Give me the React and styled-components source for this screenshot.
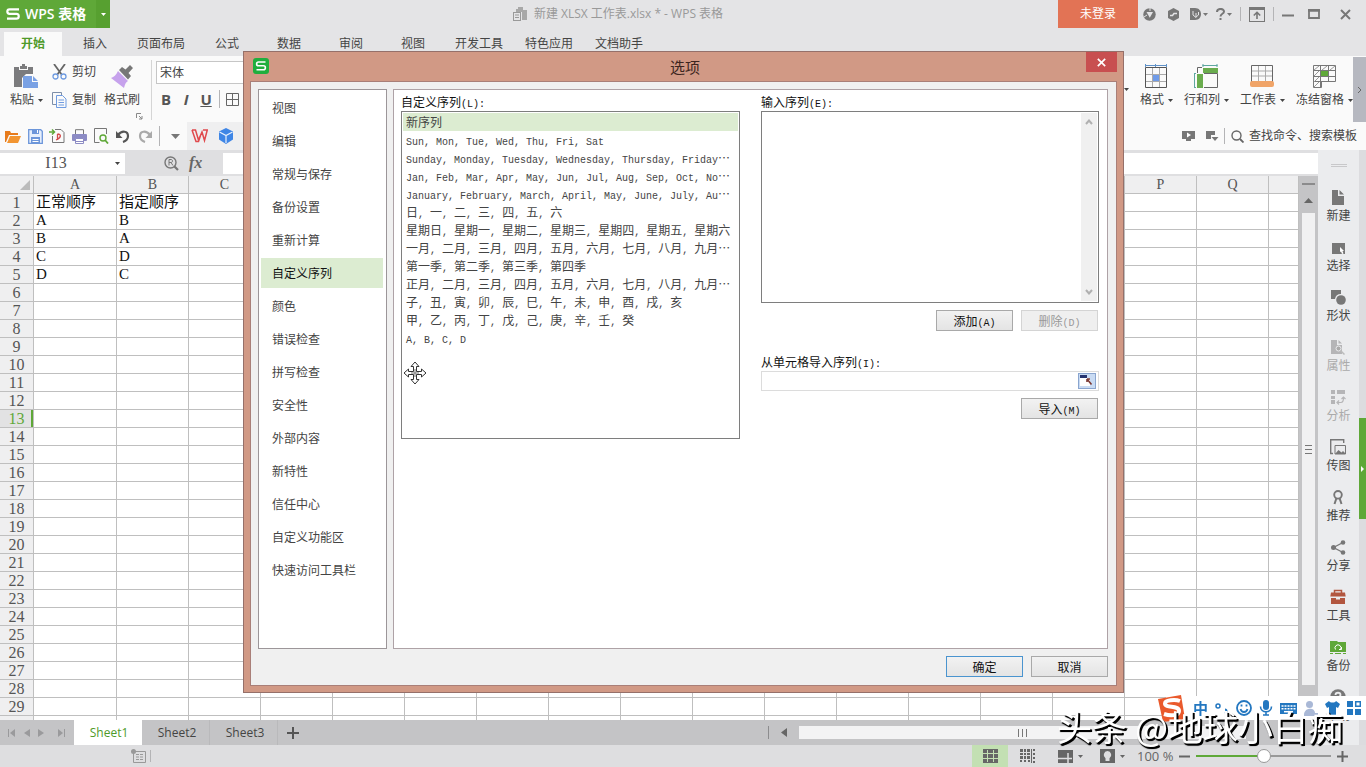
import React from "react";
import styled, { createGlobalStyle, css } from "styled-components";

const sans = `"Open Sans", "Noto Sans CJK SC", sans-serif`;
const song = `"Noto Sans CJK SC", sans-serif`;
const green = "#5fa838";

const GlobalStyle = createGlobalStyle`
  * { box-sizing: border-box; }
  body { margin: 0; overflow: hidden; font: 12px/18px ${sans}; color: #444; }
  button, input, select, textarea {
    font: inherit; color: inherit; margin: 0; padding: 0;
    border: 0; background: none; border-radius: 0; outline: 0; appearance: none;
  }
  svg { display: block; flex: none; }
  ul { list-style: none; margin: 0; padding: 0; }
`;

const Window = styled.div`
  display: flex;
  flex-direction: column;
  height: 100vh;
  background: #e4e4e6;
`;

/* ---------- title bar ---------- */
const TitleBar = styled.header`
  display: flex;
  height: 28px;
  flex: none;
`;
const Brand = styled.button`
  display: flex;
  align-items: center;
  gap: 5px;
  width: 96px;
  padding-left: 6px;
  background: ${green};
  color: #fff;
  font-size: 14px;
  font-weight: 600;
  white-space: nowrap;
`;
const BrandArrow = styled.button`
  display: grid;
  place-items: center;
  width: 14px;
  background: #57a030;
  color: #fff;
`;
const DocTitle = styled.div`
  display: flex;
  flex: 1;
  align-items: center;
  justify-content: center;
  gap: 6px;
  padding-left: 68px;
  color: #999;
  white-space: nowrap;
`;
const Login = styled.button`
  width: 80px;
  background: #e27355;
  color: #fff;
`;
const WindowTools = styled.div`
  display: flex;
  align-items: center;
  gap: 8px;
  padding: 0 10px 0 4px;
  color: #777;
`;
const IconButton = styled.button`
  display: flex;
  align-items: center;
  justify-content: center;
  gap: 2px;
  flex: none;
  width: ${(p) => (p.$w ? p.$w + "px" : "auto")};
`;
const Rule = styled.span`
  width: 1px;
  height: ${(p) => p.$h || 14}px;
  background: ${(p) => p.$c || "#b4b4b6"};
  flex: none;
`;

/* ---------- ribbon ---------- */
const Tabs = styled.nav`
  display: flex;
  align-items: flex-end;
  gap: 4px;
  height: 28px;
  flex: none;
  padding-left: 4px;
`;
const Tab = styled.button`
  height: 24px;
  width: ${(p) => (p.$long ? 66 : 58)}px;
  white-space: nowrap;
  ${(p) =>
    p.$active &&
    css`
      background: #fafafa;
      color: #4f9a2a;
      font-weight: 700;
    `}
`;
const Ribbon = styled.div`
  display: flex;
  height: 66px;
  flex: none;
  background: #fafafa;
`;
const Cluster = styled.div`
  display: flex;
  flex-direction: column;
  gap: ${(p) => p.$gap || 0}px;
  padding: ${(p) => p.$pad || "0"};
  flex: none;
`;
const BigButton = styled.button`
  display: flex;
  flex-direction: column;
  align-items: center;
  gap: 2px;
  height: 58px;
  padding-top: 8px;
  white-space: nowrap;
`;
const Caption = styled.span`
  display: flex;
  align-items: center;
  gap: 4px;
`;
const SmallButton = styled.button`
  display: flex;
  align-items: center;
  gap: 5px;
  height: 18px;
  white-space: nowrap;
`;
const Launcher = styled.button`
  align-self: flex-end;
  margin: 0 8px 0 -4px;
  padding-bottom: 2px;
`;
const Divider = styled.div`
  width: 1px;
  height: 60px;
  margin: 4px 4px 0 0;
  background: #d5d5d5;
`;
const FontSelect = styled.select`
  width: 140px;
  height: 23px;
  padding-left: 3px;
  border: 1px solid #c6c6c6;
  background: #fff;
`;
const FormatRow = styled.div`
  display: flex;
  align-items: center;
  gap: 6px;
  padding-left: 3px;
`;
const Letter = styled.button`
  width: 14px;
  height: 20px;
  font: 700 15px/20px "Open Sans", sans-serif;
  color: #555;
  font-style: ${(p) => (p.$italic ? "italic" : "normal")};
  text-decoration: ${(p) => (p.$under ? "underline" : "none")};
`;
const Spacer = styled.div`
  flex: 1;
`;
const TableTools = styled.div`
  display: flex;
  gap: 11px;
`;
const RibbonMore = styled.button`
  display: grid;
  place-items: center;
  width: 13px;
  margin-top: 1px;
  background: #b6b8c0;
  color: #666;
`;

const QuickBar = styled.div`
  display: flex;
  align-items: center;
  height: 28px;
  flex: none;
  background: #fafafa;
  color: #777;
`;
const QuickIcons = styled.div`
  display: flex;
  align-items: center;
  gap: 6px;
  padding: 0 3px 0 4px;
`;
const QuickApps = styled.div`
  display: flex;
  align-items: center;
  gap: 10px;
  height: 28px;
  width: 90px;
  padding-left: 4px;
  background: #efeff0;
`;
const Search = styled.label`
  display: flex;
  align-items: center;
  gap: 5px;
  padding-left: 6px;
  color: #666;
`;
const SearchInput = styled.input`
  width: 117px;
  height: 18px;
  color: #444;
  &::placeholder { color: #444; opacity: 1; }
`;

/* ---------- work area ---------- */
const Work = styled.div`
  display: flex;
  flex: 1;
  min-height: 0;
`;
const SheetArea = styled.main`
  display: flex;
  flex-direction: column;
  flex: 1;
  min-width: 0;
`;
const FormulaBar = styled.div`
  display: flex;
  align-items: center;
  height: 26px;
  flex: none;
  background: #dfdfe1;
`;
const NameBox = styled.div`
  display: flex;
  align-items: center;
  gap: 3px;
  width: 125px;
  height: 21px;
  background: #fff;
`;
const NameInput = styled.input`
  width: 112px;
  text-align: center;
  font: 16px/20px "Liberation Serif", serif;
  color: #555;
`;
const FormulaTools = styled.div`
  display: flex;
  align-items: center;
  gap: 10px;
  width: 98px;
  padding-left: 39px;
`;
const Fx = styled.button`
  font: italic 700 16px/20px "Liberation Serif", serif;
  color: #666;
`;
const FormulaInput = styled.input`
  flex: 1;
  height: 21px;
  background: #fff;
`;
const GridRow = styled.div`
  display: flex;
  flex: 1;
  min-height: 0;
`;
const GridView = styled.div`
  flex: 1;
  overflow: hidden;
  background: #fff;
`;
const Grid = styled.table`
  table-layout: fixed;
  border-collapse: separate;
  border-spacing: 0;
  width: 100%;
  th, td {
    height: 18px;
    padding: 0;
    border-right: 1px solid #bfbfbf;
    border-bottom: 1px solid #bfbfbf;
    overflow: hidden;
    white-space: nowrap;
    line-height: 17px;
  }
`;
const ColHead = styled.th`
  width: ${(p) => (p.$w ? p.$w + "px" : "auto")};
  background: #efeff0;
  color: #555;
  font: 14px/17px "Liberation Serif", serif;
  text-align: center;
  svg { margin-left: 20px; }
`;
const RowHead = styled.th`
  background: ${(p) => (p.$current ? "#e2e2e3" : "#efeff0")};
  font: 16px/17px "Liberation Serif", serif;
  color: ${(p) => (p.$current ? green : "#555")};
  box-shadow: ${(p) => (p.$current ? `inset -2px 0 ${green}` : "none")};
  text-align: center;
`;
const Cell = styled.td`
  font-family: "Liberation Serif", "Noto Sans CJK SC", serif;
  font-size: 15px;
  color: #111;
  text-indent: 2px;
`;
const VScroll = styled.div`
  display: flex;
  flex-direction: column;
  align-items: center;
  width: 19px;
  padding-bottom: 35px;
  background: #c4c4c6;
  color: #666;
`;
const VTop = styled.div`
  display: flex;
  flex-direction: column;
  align-items: center;
  gap: 13px;
  height: 37px;
  padding-top: 7px;
`;
const VThumb = styled.div`
  display: grid;
  place-items: center;
  width: 13px;
  flex: 1;
  background: #f1f1f2;
`;
const SheetBar = styled.div`
  display: flex;
  align-items: center;
  height: 25px;
  flex: none;
  background: #c4c4c6;
  color: #9a9a9c;
`;
const SheetNav = styled.div`
  display: flex;
  align-items: center;
  gap: 8px;
  width: 74px;
  padding-left: 8px;
`;
const SheetTab = styled.button`
  width: 68px;
  height: 25px;
  padding-left: 3px;
  border-right: 1px solid ${(p) => (p.$active ? "#fff" : "#b9b9bb")};
  font-size: 12px;
  color: ${(p) => (p.$active ? "#4f9a2a" : "#444")};
  background: ${(p) => (p.$active ? "#fff" : "transparent")};
`;
const HScroll = styled.div`
  display: flex;
  align-items: center;
  gap: 12px;
  width: 550px;
  color: #666;
`;
const HThumb = styled.div`
  display: grid;
  place-items: center;
  width: 447px;
  height: 13px;
  background: #f3f3f4;
`;

/* ---------- side panel ---------- */
const SidePanel = styled.aside`
  display: flex;
  flex-direction: column;
  align-items: center;
  gap: 20px;
  width: 41px;
  padding-top: 14px;
  overflow: hidden;
  background: #ebecee;
`;
const SideItem = styled.button`
  display: flex;
  flex-direction: column;
  align-items: center;
  justify-content: flex-end;
  gap: 2px;
  height: 38px;
  flex: none;
  margin-bottom: -8px;
  color: ${(p) => (p.$off ? "#aaa" : "#444")};
`;
const SideIcon = styled.span`
  color: ${(p) => p.$c || "#777"};
`;
const Edge = styled.div`
  display: flex;
  flex-direction: column;
  justify-content: center;
  width: 7px;
  background: #dcdcdf;
`;
const EdgeHandle = styled.button`
  display: grid;
  place-items: center;
  height: 101px;
  margin-top: 42px;
  background: ${green};
  color: #fff;
`;

/* ---------- status bar ---------- */
const StatusBar = styled.footer`
  display: flex;
  align-items: center;
  height: 22px;
  flex: none;
  background: #dedee0;
  color: #666;
`;
const StatusLeft = styled.div`
  display: flex;
  align-items: center;
  gap: 4px;
  padding-left: 131px;
  flex: 1;
`;
const ViewButton = styled.button`
  display: flex;
  align-items: center;
  justify-content: center;
  gap: 5px;
  width: ${(p) => p.$w}px;
  height: 22px;
  background: ${(p) => (p.$active ? "#c3e0b3" : "transparent")};
`;
const Zoom = styled.div`
  display: flex;
  align-items: center;
  gap: 6px;
  padding: 0 18px 0 7px;
  white-space: nowrap;
`;
const ZoomValue = styled.span`
  width: 36px;
  font-size: 13px;
`;
const ZoomSlider = styled.input`
  width: 135px;
  height: 16px;
  &::-webkit-slider-runnable-track {
    height: 2px;
    background: linear-gradient(90deg, ${green} 50%, #999 50%);
  }
  &::-webkit-slider-thumb {
    appearance: none;
    width: 14px;
    height: 14px;
    margin-top: -6px;
    border: 1px solid #999;
    border-radius: 50%;
    background: #fff;
  }
`;

/* ---------- options dialog ---------- */
const Overlay = styled.div`
  position: fixed;
  inset: 0;
  display: flex;
  justify-content: center;
  align-items: flex-start;
  padding: 51px 0 0 1px;
`;
const Dialog = styled.section`
  width: 881px;
  border: 1px solid #95706a;
  background: #d19985;
  color: #333;
  font-family: ${song};
`;
const DialogTitle = styled.div`
  display: grid;
  grid-template-columns: 31px 1fr 31px;
  height: 29px;
  padding: 0 6px 0 9px;
  h1 {
    margin: 0;
    font: 15px/29px ${song};
    text-align: center;
    color: #3c2520;
  }
  > svg { margin-top: 6px; }
`;
const CloseButton = styled.button`
  display: grid;
  place-items: center;
  width: 31px;
  height: 20px;
  background: #c84f50;
  color: #fff;
`;
const DialogBody = styled.div`
  margin: 0 6px 6px;
  padding: 7px 8px 8px 7px;
  border: 1px solid #a97f78;
  background: #f0f0f0;
`;
const Panes = styled.div`
  display: grid;
  grid-template-columns: 129px 1fr;
  gap: 6px;
  height: 560px;
`;
const Categories = styled.ul`
  display: flex;
  flex-direction: column;
  gap: 3px;
  padding: 3px 3px 3px 2px;
  border: 1px solid #9c9699;
  background: #fff;
`;
const Category = styled.button`
  width: 100%;
  height: 30px;
  padding-left: 11px;
  text-align: left;
  color: ${(p) => (p.$active ? "#111" : "#444")};
  background: ${(p) => (p.$active ? "#dcecd1" : "transparent")};
`;
const Page = styled.div`
  display: grid;
  grid-template-columns: 339px 338px;
  align-items: start;
  column-gap: 21px;
  padding: 3px 7px;
  border: 1px solid #aea2a6;
  background: #fff;
`;
const Field = styled.div`
  display: flex;
  flex-direction: column;
`;
const Label = styled.label`
  height: 18px;
  color: #111;
  white-space: pre;
`;
const Latin = styled.span`
  font-family: "Liberation Mono", monospace;
  font-size: 10px;
`;
const ListBox = styled.ul`
  position: relative;
  height: 328px;
  padding: 1px;
  border: 1px solid #7e7e7e;
  background: #fff;
`;
const Option = styled.li`
  height: 18px;
  padding-left: 3px;
  line-height: 18px;
  white-space: pre;
  overflow: hidden;
  color: #444;
  background: ${(p) => (p.$active ? "#dcecd1" : "transparent")};
`;
const Pointer = styled.div`
  position: absolute;
  left: 1px;
  top: 249px;
`;
const EntryBox = styled.div`
  display: flex;
  height: 192px;
  padding: 1px;
  border: 1px solid #7e7e7e;
`;
const Entry = styled.textarea`
  flex: 1;
  resize: none;
`;
const EntryScroll = styled.div`
  display: flex;
  flex-direction: column;
  justify-content: space-between;
  align-items: center;
  width: 16px;
  padding: 6px 0;
  background: #f0f0f0;
  color: #b0b0b0;
`;
const ButtonRow = styled.div`
  display: flex;
  justify-content: flex-end;
  gap: 8px;
  padding: ${(p) => p.$pad || "7px 1px 0 0"};
`;
const PushButton = styled.button`
  width: 77px;
  height: 21px;
  border: 1px solid ${(p) => (p.$primary ? "#4a94cf" : "#a9a9a9")};
  background: linear-gradient(#f2f2f2, #e4e4e4);
  line-height: 19px;
  color: #111;
  &:disabled {
    color: #999;
    border-color: #d4d4d4;
    background: #efefef;
  }
`;
const RangeBox = styled.div`
  display: flex;
  align-items: center;
  height: 20px;
  padding-right: 2px;
  border: 1px solid #dcdcdc;
`;
const RangeInput = styled.input`
  flex: 1;
  height: 18px;
`;

/* ---------- input method bar and channel name ---------- */
const InputMethod = styled.div`
  position: fixed;
  right: 0;
  bottom: 47px;
  display: flex;
  align-items: center;
  gap: 7px;
  height: 24px;
  padding: 0 5px 0 5px;
  background: linear-gradient(90deg, transparent 14px, #fff 14px);
  color: #2377c0;
  font: 700 15px/22px ${song};
`;
const Signature = styled.div`
  position: fixed;
  right: 23px;
  bottom: 18px;
  font: 400 35px/46px ${song};
  color: #fff;
  text-shadow: 2px 2px 0 #000, 1px 2px 1px #000;
  white-space: nowrap;
`;

/* ---------- icons ---------- */
const Svg = ({ w = 16, h = w, vb, children, ...rest }) => (
  <svg width={w} height={h} viewBox={vb || `0 0 ${w} ${h}`} fill="none" stroke="currentColor" aria-hidden="true" {...rest}>
    {children}
  </svg>
);
const F = { fill: "currentColor", stroke: "none" };

const Down = ({ w = 5 }) => <Svg w={w} h={w > 6 ? 5 : 3} vb="0 0 6 3" preserveAspectRatio="none"><path {...F} d="M0 0h6L3 3z" /></Svg>;
const SLogo = ({ w = 14, h = 12 }) => (
  <Svg w={w} h={h} vb="0 0 14 12" strokeWidth="2.2"><path d="M13 1.3H3.500C.6 1.300.6 5.800 3.500 5.800h7c3 0 3 4.900 0 4.900H1" /></Svg>
);
const DocIcon = () => (
  <Svg w={15} h={14}><path {...F} d="M5 0h5v3h4v10h-5V5H3V2h2z" opacity=".8" /><rect x=".5" y="5.500" width="7" height="8" fill="#e4e4e6" /><path d="M2 8h4M2 10.500h4" /></Svg>
);
const ShieldIcon = () => (
  <Svg w={13}><circle {...F} cx="6.500" cy="6.500" r="6.200" /><path d="M3.500 4h6.500L6.800 9.800z" fill="#e4e4e6" stroke="none" /><path d="M7 0v3M1 9l3-2" stroke="#e4e4e6" /></Svg>
);
const SkinIcon = () => (
  <Svg w={13}><path {...F} d="M6.500 0 12 3v7l-5.500 3L1 10V3z" /><path d="M3 7.500h2.500L7 5.500h3" stroke="#e4e4e6" strokeWidth="1.500" /></Svg>
);
const DocerIcon = () => (
  <Svg w={11} h={12}><path {...F} d="M0 0h5c8 0 8 12 0 12H0z" /><path d="M3 3v4l3 2.500V5M6 9l2.500-2V4" stroke="#e4e4e6" /></Svg>
);
const HelpIcon = () => (
  <Svg w={9} h={12} strokeWidth="2"><path d="M1 4c0-4 7-4 7-.5C8 6 4.500 5.500 4.500 8.500M4.500 10v2" /></Svg>
);
const CollapseIcon = () => (
  <Svg w={16} h={15}><rect x=".5" y=".5" width="15" height="14" /><path d="M0 2h16" strokeWidth="2" /><path d="M8 12V5.500M4.800 8.500 8 5.300l3.200 3.200" strokeWidth="1.600" /></Svg>
);
const MinIcon = () => <Svg w={12}><path d="M0 7.500h12" strokeWidth="2" /></Svg>;
const MaxIcon = () => <Svg w={12} h={10}><path d="M1 1h10v8H1z" strokeWidth="1.800" /><path d="M0 1.500h12" strokeWidth="2.500" /></Svg>;
const CrossIcon = ({ w = 11, s = 2 }) => <Svg w={w} vb="0 0 11 11"><path d="m1 1 9 9M10 1l-9 9" strokeWidth={s} /></Svg>;

const PasteIcon = () => (
  <Svg w={25} h={25}>
    <path fill="#7b7b7d" stroke="none" d="M0 3h5v3h9V3h5v7h-7l-4 4v9H0z" />
    <path fill="#7b7b7d" stroke="none" d="M6 2h2V0h3v2h2v3H6z" />
    <path fill="#79a1e4" stroke="none" d="M9 12h9v6h6v6H9zM19 12l5 5h-5z" />
  </Svg>
);
const CutIcon = () => (
  <Svg w={15} h={16}><path d="m2 0 8 11M13 0 5 11" stroke="#666" strokeWidth="1.800" /><circle cx="3.500" cy="12.500" r="2.500" stroke="#6f9be0" strokeWidth="1.300" /><circle cx="11.500" cy="12.500" r="2.500" stroke="#6f9be0" strokeWidth="1.300" /></Svg>
);
const CopyIcon = () => (
  <Svg w={15} h={16}><path d="M4 12.500H.5V.5h9V3" stroke="#7d8ea8" /><path d="M4.500 3.500h6l3.500 3.500v8.500H4.500zM6.500 8h5.500M6.500 10.500h5.500M6.500 13h5.500" stroke="#6f9be0" /></Svg>
);
const BrushIcon = () => (
  <Svg w={25} h={25}>
    <path fill="#c6a2ec" stroke="none" d="m8 7 10 10c-3 2-3 4-4 7L1 14c3-1 5-3 7-7z" />
    <path fill="#777" stroke="none" d="m9 6 3-3 3.500 2.500L20 1l3 3-4.500 5 2.500 3-3 3.500z" />
  </Svg>
);
const BordersIcon = () => <Svg w={13}><path d="M.5.5h12v12H.5zM6.500.5v12M.5 6.500h12" stroke="#666" /></Svg>;
const LaunchIcon = () => <Svg w={7}><path d="M.5 5V.5H5M3 3l3 3M6 3v3H3" stroke="#888" /></Svg>;

const FormatIcon = () => (
  <Svg w={24} h={25}>
    <path d="M1 1.500h22M1.500 0v3M11.500 0v3M22.500 0v3" stroke="#6092c8" />
    <rect x="9" y="11" width="6" height="6" fill="#6f9be8" stroke="none" />
    <path d="M8.500 4v20M15.500 4v20M1 10.500h22M1 17.500h22" stroke="#aaa" />
    <path d="M1.500 3.500h21v20h-21z" stroke="#555" />
  </Svg>
);
const RowsColsIcon = () => (
  <Svg w={24} h={25}>
    <path d="M8.500 1.500h15M9 0v3M23 0v3M.5 9v15M0 9.500h2M0 23.500h2" stroke="#5fa7a0" />
    <path d="M3.500 9V3.500H8M10 9.500h13.500v14H10" stroke="#666" />
    <path fill="#6aac4e" stroke="none" d="M9 4h15v5H9zM3 10h6v14H3z" />
  </Svg>
);
const WorksheetIcon = () => (
  <Svg w={24} h={25}>
    <path d="M8.500 1v16M15.500 1v16M1 7h22M1 12h22" stroke="#aaa" /><path d="M1.500 18V1.500h21V18" stroke="#666" />
    <rect x="0" y="17" width="24" height="6" rx="2" fill="#f0a468" stroke="none" />
  </Svg>
);
const FreezeIcon = () => (
  <Svg w={25} h={25}>
    <rect x="9" y="6" width="7" height="6" fill="#5fa838" stroke="none" />
    <path d="M1.500 1.500h22v16H9.500v6h-8zM8.500 1v22M16.500 1v16M1 6.500h23M1 12.500h22M1 17.500h9" stroke="#777" />
    <path d="m2 6 5-4M10 6l5-4M18 6l5-4M2 12l5-5M2 18l5-5M2 23l5-5" stroke="#999" />
  </Svg>
);

const OpenIcon = () => <Svg w={16} h={13}><path fill="#e77b1c" stroke="none" d="M0 1h5l1 2h7v2H4L1 12H0z" /><path fill="#f29532" stroke="none" d="M5 6h11l-3 7H2z" /></Svg>;
const SaveIcon = () => <Svg w={15}><path d="M.7.700h12l1.600 1.600v12H.7z" stroke="#6c96da" strokeWidth="1.300" fill="#e6effc" /><path fill="#6c96da" stroke="none" d="M4 0h7v5H4zM3 8h9v6H3z" /><path stroke="#fff" d="M9.500 1v3M4.500 10.500h6M4.500 12.500h6" /></Svg>;
const PdfIcon = () => <Svg w={16}><path d="M6 1.500h6l3 3v10H3.500V8" stroke="#777" /><path d="M7 12c5-2 6-6 1.500-6M8.500 6v6" stroke="#d34b4b" strokeWidth="1.300" /><path d="M0 4h5M3 1.500 5.500 4 3 6.500" stroke={green} strokeWidth="1.500" /></Svg>;
const PrintIcon = () => <Svg w={15}><path d="M3.500 5V.7h8V5" stroke="#777" /><rect x="0" y="5" width="15" height="7" rx="1" fill="#8c8bc4" stroke="none" /><path fill="#fff" stroke="#8c8bc4" d="M3.500 9.500h8v5h-8z" /><path stroke="#8c8bc4" d="M3 12.500h9" /></Svg>;
const PreviewIcon = () => <Svg w={15} h={16}><path d="M12.500 6V.5H.5v14h5" stroke="#777" /><circle cx="9" cy="10" r="3" stroke={green} strokeWidth="1.400" /><path d="m11 12 3 3.500" stroke={green} strokeWidth="1.800" /></Svg>;
const UndoIcon = () => <Svg w={14} stroke="#555"><path strokeWidth="2.200" d="M2 6c4-5 10-4 10 1 0 3-2 5-5 6" /><path fill="#555" stroke="none" d="M0 2v7h6.500z" /></Svg>;
const RedoIcon = () => <Svg w={14} stroke="#aaa"><path strokeWidth="2.200" d="M12 6C8 1 2 2 2 7c0 3 2 5 5 6" /><path fill="#aaa" stroke="none" d="M14 2v7H7.500z" /></Svg>;
const WIcon = () => <Svg w={17} h={14} stroke="#e04a4d" strokeWidth="1.500"><path d="M1 1h3.500l3 10L11 3l2.500 8.500L16.300 1H12M1 1l4 11.500h2.500l2-6" /></Svg>;
const CubeIcon = () => <Svg w={16} h={16}><path fill="#3f86e6" stroke="none" d="M8 0l7 3.500v8L8 16l-7-4.500v-8z" /><path d="M1.500 4 8 7.500 14.500 4M8 7.500V15" stroke="#e8f1fd" strokeWidth="1.200" /></Svg>;
const PlayIcon = () => <Svg w={13} h={12}><path {...F} d="M0 1h13v8H9v2H4V9H0z" /><path fill="#fff" stroke="none" d="M5 2.500 9 5 5 7.500z" /></Svg>;
const FlagIcon = () => <Svg w={13} h={12}><path {...F} d="M0 1h9v4H5v4H0zM5.500 7h7L9 11z" /></Svg>;
const LensIcon = () => <Svg w={13}><circle cx="5.500" cy="5.500" r="4.500" strokeWidth="1.400" /><path d="m9 9 3.500 3.500" strokeWidth="1.800" /></Svg>;
const RLensIcon = () => <Svg w={15} stroke="#777"><circle cx="6.500" cy="6.500" r="5.500" strokeWidth="1.400" /><path d="M5 9.500v-6h2c2 0 2 3 0 3H5M7 6.500l2 3" /><path d="m10.500 10.500 3.500 3.500" strokeWidth="2.200" /></Svg>;

const sideIcons = {
  新建: <Svg w={13} h={15}><path {...F} d="M0 0h6v6h6v9H0zM7.500 0 12 4.500H7.500z" /></Svg>,
  选择: <Svg w={13} h={15}><path {...F} d="M0 3h13v11H0z" /><path fill="#fff" stroke="none" d="m8 7 4 4H10.500l1 2.500-1.500.5-1-2.500L8 12z" /></Svg>,
  形状: <Svg w={15}><path {...F} d="M0 0h10v4a6 6 0 0 0-6 5H0z" /><circle {...F} cx="10" cy="10" r="4.800" /></Svg>,
  属性: <Svg w={14} h={15}><path {...F} d="M0 0h6v5h5v9H0zM7.500 0 11 3.500H7.500z" /><circle cx="7.500" cy="8.500" r="2.500" fill="#aaa" stroke="#ebecee" /><path d="m9.500 10.500 4 4" stroke="#bbb" strokeWidth="1.500" /></Svg>,
  分析: <Svg w={15}><path {...F} d="M0 0h4v4H0zM6 0h8v4H6zM0 6h4v3H0zM0 10h4v4H0z" /><path d="M6 12.500h4c2 0 2.500-3 2.500-5M10.500 9l2-2 2 2M8 10.500l-2 2 2 2" strokeWidth="1.200" /></Svg>,
  传图: <Svg w={16}><path d="M3 14.500H.7V.7h13V4" strokeWidth="1.400" /><path d="M5 6.500h10.500v8.500H5z" /><path {...F} d="m5 15 3.500-4 3 2.500 1.500-1.500 2 2V15z" /></Svg>,
  推荐: <Svg w={12} h={15}><circle cx="6" cy="4.800" r="3.800" strokeWidth="1.900" /><path d="m4.500 8-2 6M7.500 8l2 6" strokeWidth="2" /></Svg>,
  分享: <Svg w={15}><circle {...F} cx="2.500" cy="7.500" r="2.500" /><circle {...F} cx="12" cy="2.500" r="2.300" /><circle {...F} cx="12" cy="12.500" r="2.300" /><path d="m12 2.500-9.500 5 9.500 5" strokeWidth="1.300" /></Svg>,
  工具: <Svg w={16}><path d="M4.500 4V1.500h7V4" strokeWidth="1.500" /><path {...F} d="M1 3.500h14l.7 4H.3zM1 9h5v1.500h4V9h5v6H1z" /></Svg>,
  备份: <Svg w={16} h={15}><path {...F} d="M0 1h7l1 1h8v10H0zM0 13h3v1H0zM5 13h6v1H5zM13 13h3v1h-3z" /><path stroke="#fff" d="M5.500 9.500a3 3 0 1 1 5 0M9 9.500h2.500V7" /></Svg>,
  帮助: <Svg w={16}><circle {...F} cx="8" cy="8" r="7.800" /><path stroke="#ebecee" strokeWidth="1.800" d="M5.500 6c0-3 5-3 5 0 0 2-2.500 1.500-2.500 4M8 11.500v1.500" /></Svg>,
};

const MoveCursor = () => (
  <Svg w={24} h={24} stroke="#333" fill="#fff">
    <path d="m12 1 4 4.500h-2.500v5h5V8L23 12l-4.500 4v-2.500h-5v5H16L12 23l-4-4.500h2.500v-5h-5V16L1 12l4.500-4v2.500h5v-5H8z" />
    <path d="M12 8v8M8 12h8" stroke="#777" />
  </Svg>
);
const PickerIcon = () => (
  <Svg w={18} h={16}><rect x=".5" y=".5" width="17" height="15" fill="#c9dbf3" stroke="#8aa5cf" /><path fill="#fff" stroke="none" d="M2 5h10v8H2z" /><path fill="#27356f" stroke="none" d="M2 2h7v3H2z" /><path d="M9 6l4.500 5.500M9 6h3M9 6v3" stroke="#7c3a35" strokeWidth="1.600" /></Svg>
);

/* ---------- data ---------- */
const tabs = ["开始", "插入", "页面布局", "公式", "数据", "审阅", "视图", "开发工具", "特色应用", "文档助手"];
const categories = ["视图", "编辑", "常规与保存", "备份设置", "重新计算", "自定义序列", "颜色", "错误检查", "拼写检查", "安全性", "外部内容", "新特性", "信任中心", "自定义功能区", "快速访问工具栏"];
const lists = [
  "新序列",
  "Sun, Mon, Tue, Wed, Thu, Fri, Sat",
  "Sunday, Monday, Tuesday, Wednesday, Thursday, Friday…",
  "Jan, Feb, Mar, Apr, May, Jun, Jul, Aug, Sep, Oct, No…",
  "January, February, March, April, May, June, July, Au…",
  "日, 一, 二, 三, 四, 五, 六",
  "星期日, 星期一, 星期二, 星期三, 星期四, 星期五, 星期六",
  "一月, 二月, 三月, 四月, 五月, 六月, 七月, 八月, 九月…",
  "第一季, 第二季, 第三季, 第四季",
  "正月, 二月, 三月, 四月, 五月, 六月, 七月, 八月, 九月…",
  "子, 丑, 寅, 卯, 辰, 巳, 午, 未, 申, 酉, 戌, 亥",
  "甲, 乙, 丙, 丁, 戊, 己, 庚, 辛, 壬, 癸",
  "A, B, C, D",
];
const columns = "ABCDEFGHIJKLMNOPQ".split("");
const cells = [["正常顺序", "指定顺序"], ["A", "B"], ["B", "A"], ["C", "D"], ["D", "C"]];
const rows = Array.from({ length: 29 }, (_, i) => i + 1);

/* Chinese at full width with half-width Latin between. */
const Mixed = ({ children }) =>
  children.split(/([\x20-\x7e]+)/).map((part, i) => (i % 2 ? <Latin key={i}>{part}</Latin> : part));

const Big = ({ icon, label }) => (
  <BigButton>
    {icon}
    <Caption>{label}<Down /></Caption>
  </BigButton>
);

function Spreadsheet() {
  return (
    <Grid>
      <thead>
        <tr>
          <ColHead $w={34} aria-label="全选"><Svg w={10} h={10}><path fill="#bbb" stroke="none" d="M10 0v10H0z" /></Svg></ColHead>
          {columns.map((c, i) => <ColHead key={c} $w={i === 0 ? 83 : 72}>{c}</ColHead>)}
          <ColHead />
        </tr>
      </thead>
      <tbody>
        {rows.map((n) => (
          <tr key={n}>
            <RowHead $current={n === 13}>{n}</RowHead>
            {columns.map((c, i) => <Cell key={c}>{cells[n - 1]?.[i]}</Cell>)}
            <Cell />
          </tr>
        ))}
        <tr>
          <RowHead />
          {columns.map((c) => <Cell key={c} />)}
          <Cell />
        </tr>
      </tbody>
    </Grid>
  );
}

function OptionsDialog() {
  return (
    <Overlay>
      <Dialog role="dialog" aria-labelledby="options-title">
        <DialogTitle>
          <Svg w={16}><rect width="16" height="16" rx="3" fill="#1fae3e" stroke="none" /><path stroke="#fff" strokeWidth="1.600" d="M12.500 4H5.500c-2.500 0-2.500 3.800 0 3.800h5c2.500 0 2.500 4 0 4h-7" /></Svg>
          <h1 id="options-title">选项</h1>
          <CloseButton aria-label="关闭"><CrossIcon w={9} /></CloseButton>
        </DialogTitle>
        <DialogBody>
          <Panes>
            <Categories>
              {categories.map((c) => <li key={c}><Category $active={c === "自定义序列"}>{c}</Category></li>)}
            </Categories>
            <Page>
              <Field>
                <Label as="span" id="lists-label"><Mixed>自定义序列(L):</Mixed></Label>
                <ListBox role="listbox" aria-labelledby="lists-label">
                  {lists.map((l, i) => <Option key={l} role="option" aria-selected={i === 0} $active={i === 0}><Mixed>{l}</Mixed></Option>)}
                  <Pointer><MoveCursor /></Pointer>
                </ListBox>
              </Field>
              <Field>
                <Label htmlFor="entries"><Mixed>输入序列(E):</Mixed></Label>
                <EntryBox>
                  <Entry id="entries" />
                  <EntryScroll>
                    <Svg w={8} h={6} strokeWidth="2"><path d="m1 5 3-3.500L7 5" /></Svg>
                    <Svg w={8} h={6} strokeWidth="2"><path d="m1 1 3 3.500L7 1" /></Svg>
                  </EntryScroll>
                </EntryBox>
                <ButtonRow $pad="7px 1px 22px 0">
                  <PushButton><Mixed>添加(A)</Mixed></PushButton>
                  <PushButton disabled><Mixed>删除(D)</Mixed></PushButton>
                </ButtonRow>
                <Label htmlFor="range"><Mixed>从单元格导入序列(I):</Mixed></Label>
                <RangeBox>
                  <RangeInput id="range" />
                  <IconButton aria-label="选择区域"><PickerIcon /></IconButton>
                </RangeBox>
                <ButtonRow><PushButton><Mixed>导入(M)</Mixed></PushButton></ButtonRow>
              </Field>
            </Page>
          </Panes>
          <ButtonRow $pad="7px 0 0 0">
            <PushButton $primary>确定</PushButton>
            <PushButton>取消</PushButton>
          </ButtonRow>
        </DialogBody>
      </Dialog>
    </Overlay>
  );
}

export default function App() {
  return (
    <Window lang="zh-CN">
      <GlobalStyle />
      <TitleBar>
        <Brand><SLogo />WPS 表格</Brand>
        <BrandArrow aria-label="菜单"><Down /></BrandArrow>
        <DocTitle><DocIcon />新建 XLSX 工作表.xlsx * - WPS 表格</DocTitle>
        <Login>未登录</Login>
        <WindowTools>
          <IconButton $w={14} aria-label="安全"><ShieldIcon /></IconButton>
          <IconButton $w={18} aria-label="皮肤"><SkinIcon /></IconButton>
          <IconButton $w={17} aria-label="稻壳"><DocerIcon /><Down /></IconButton>
          <IconButton $w={17} aria-label="帮助"><HelpIcon /><Down /></IconButton>
          <Rule />
          <IconButton $w={16} aria-label="收起功能区"><CollapseIcon /></IconButton>
          <Rule />
          <IconButton $w={12} aria-label="最小化"><MinIcon /></IconButton>
          <IconButton $w={24} aria-label="最大化"><MaxIcon /></IconButton>
          <IconButton $w={22} aria-label="关闭"><CrossIcon /></IconButton>
        </WindowTools>
      </TitleBar>

      <Tabs>
        {tabs.map((t, i) => <Tab key={t} $active={i === 0} $long={t.length > 2}>{t}</Tab>)}
      </Tabs>

      <Ribbon>
        <Cluster $pad="0 9px 0 10px"><Big icon={<PasteIcon />} label="粘贴" /></Cluster>
        <Cluster $gap={10} $pad="7px 8px 0 0">
          <SmallButton><CutIcon />剪切</SmallButton>
          <SmallButton><CopyIcon />复制</SmallButton>
        </Cluster>
        <Cluster>
          <BigButton><BrushIcon /><Caption>格式刷</Caption></BigButton>
        </Cluster>
        <Launcher aria-label="剪贴板"><LaunchIcon /></Launcher>
        <Divider />
        <Cluster $gap={5} $pad="5px 0 0 0">
          <FontSelect aria-label="字体" defaultValue="宋体"><option>宋体</option></FontSelect>
          <FormatRow>
            <Letter>B</Letter>
            <Letter $italic>I</Letter>
            <Letter $under>U</Letter>
            <Rule $h={18} />
            <IconButton aria-label="边框"><BordersIcon /></IconButton>
          </FormatRow>
        </Cluster>
        <Spacer />
        <TableTools>
          <Caption><Down /></Caption>
          <Big icon={<FormatIcon />} label="格式" />
          <Big icon={<RowsColsIcon />} label="行和列" />
          <Big icon={<WorksheetIcon />} label="工作表" />
          <Big icon={<FreezeIcon />} label="冻结窗格" />
        </TableTools>
        <RibbonMore aria-label="更多"><Svg w={5} h={8}><path d="m1 1 3 3-3 3" /></Svg></RibbonMore>
      </Ribbon>

      <QuickBar>
        <QuickIcons>
          <IconButton $w={17} aria-label="打开"><OpenIcon /></IconButton>
          <IconButton $w={16} aria-label="保存"><SaveIcon /></IconButton>
          <IconButton $w={16} aria-label="输出为PDF"><PdfIcon /></IconButton>
          <IconButton $w={16} aria-label="打印"><PrintIcon /></IconButton>
          <IconButton $w={16} aria-label="打印预览"><PreviewIcon /></IconButton>
          <IconButton $w={16} aria-label="撤销"><UndoIcon /></IconButton>
          <IconButton $w={16} aria-label="恢复"><RedoIcon /></IconButton>
          <Rule $h={20} />
          <IconButton $w={18} aria-label="自定义"><Down w={9} /></IconButton>
        </QuickIcons>
        <QuickApps>
          <IconButton aria-label="WPS"><WIcon /></IconButton>
          <IconButton aria-label="应用"><CubeIcon /></IconButton>
        </QuickApps>
        <Spacer />
        <IconButton $w={24} aria-label="播放"><PlayIcon /></IconButton>
        <IconButton $w={24} aria-label="标记"><FlagIcon /></IconButton>
        <Rule $h={16} />
        <Search><LensIcon /><SearchInput aria-label="查找" placeholder="查找命令、搜索模板" /></Search>
      </QuickBar>

      <Work>
        <SheetArea>
          <FormulaBar>
            <NameBox><NameInput aria-label="名称框" defaultValue="I13" /><Down /></NameBox>
            <FormulaTools>
              <IconButton aria-label="浏览"><RLensIcon /></IconButton>
              <Fx>fx</Fx>
            </FormulaTools>
            <FormulaInput aria-label="编辑栏" />
          </FormulaBar>
          <GridRow>
            <GridView><Spreadsheet /></GridView>
            <VScroll>
              <VTop>
                <Svg w={13} h={2}><path {...F} d="M0 0h13v2H0z" opacity=".6" /></Svg>
                <Svg w={9} h={5}><path {...F} d="M0 5h9L4.500 0z" /></Svg>
              </VTop>
              <VThumb><Svg w={7} h={9} stroke="#777"><path d="M0 .5h7M0 4.500h7M0 8.500h7" /></Svg></VThumb>
            </VScroll>
          </GridRow>
          <SheetBar>
            <SheetNav>
              <Svg w={8} h={8}><path {...F} d="M0 0h1v8H0zM7 0v8L2 4z" /></Svg>
              <Svg w={6} h={8}><path {...F} d="M6 0v8L0 4z" /></Svg>
              <Svg w={6} h={8}><path {...F} d="M0 0v8l6-4z" /></Svg>
              <Svg w={14} h={8}><path {...F} d="M6 0v8l5-4zM12 0h1v8h-1z" /></Svg>
            </SheetNav>
            <SheetTab $active>Sheet1</SheetTab>
            <SheetTab>Sheet2</SheetTab>
            <SheetTab>Sheet3</SheetTab>
            <IconButton $w={30} aria-label="新建工作表"><Svg w={12} stroke="#555" strokeWidth="2"><path d="M6 0v12M0 6h12" /></Svg></IconButton>
            <Spacer />
            <HScroll>
              <Rule $h={13} $c="#8c8c8e" />
              <Svg w={6} h={9}><path {...F} d="M6 0v9L0 4.500z" /></Svg>
              <HThumb><Svg w={9} h={8} stroke="#777"><path d="M.5 0v8M4.500 0v8M8.500 0v8" /></Svg></HThumb>
            </HScroll>
          </SheetBar>
        </SheetArea>
        <SidePanel>
          <Svg w={16} h={3} stroke="#c8c8ca"><path d="M0 .5h16M0 2.500h16" /></Svg>
          {Object.entries(sideIcons).map(([name, icon]) => {
            const off = name === "属性" || name === "分析";
            const color = off ? "#b5b5b7" : name === "工具" ? "#b2563f" : name === "备份" ? green : undefined;
            return <SideItem key={name} $off={off}><SideIcon $c={color}>{icon}</SideIcon>{name}</SideItem>;
          })}
        </SidePanel>
        <Edge>
          <EdgeHandle aria-label="展开"><Svg w={3} h={6}><path {...F} d="M0 0v6l3-3z" /></Svg></EdgeHandle>
        </Edge>
      </Work>

      <StatusBar>
        <StatusLeft>
          <Svg w={15} h={14} stroke="#999"><path d="M3 2.500h11.500v11H2.500V4M5 5.500h3M9 5.500h3M5 8h3M9 8h3M5 10.500h3M9 10.500h3" /><circle cx="2.500" cy="2.500" r="2.500" fill="#999" stroke="none" /></Svg>
          <Rule $h={12} />
        </StatusLeft>
        <ViewButton $w={36} $active aria-label="普通视图"><Svg w={15} h={14}><path {...F} d="M0 0h15v14H0z" /><path stroke="#c3e0b3" d="M4.500 1v12M10.500 1v12M0 4.500h15M0 9.500h15" /></Svg></ViewButton>
        <ViewButton $w={38} aria-label="分页预览"><Svg w={15} h={14}><path {...F} d="M0 0h10v10H0zM11 0h1v14h-1zM13 0h2v2h-2zM13 4h2v2h-2zM13 8h2v2h-2zM0 11h2v2H0zM4 11h2v2H4zM8 11h2v2H8zM13 12h2v2h-2z" /><path stroke="#dedee0" d="M3.500 0v14M6.500 0v14M0 3.500h10M0 6.500h10" /></Svg></ViewButton>
        <ViewButton $w={48} aria-label="阅读模式"><Svg w={15} h={13}><path {...F} d="M0 0h15v13H0z" /><path stroke="#dedee0" strokeWidth="1.500" d="M0 8.500h14M10 3v10" /></Svg><Down /></ViewButton>
        <ViewButton $w={36} aria-label="护眼模式"><Svg w={15} h={14}><path {...F} d="M0 0h15v14H0z" /><path fill="#dedee0" stroke="none" d="M7.500 2a4 4 0 0 1 2 7.300V12h-4V9.300a4 4 0 0 1 2-7.300z" /></Svg><Down /></ViewButton>
        <Zoom>
          <ZoomValue>100 %</ZoomValue>
          <IconButton aria-label="缩小"><Svg w={11} h={11} strokeWidth="2"><path d="M0 5.500h11" /></Svg></IconButton>
          <ZoomSlider type="range" aria-label="缩放" defaultValue="50" />
          <IconButton aria-label="放大"><Svg w={11} h={11} strokeWidth="2"><path d="M0 5.500h11M5.500 0v11" /></Svg></IconButton>
        </Zoom>
      </StatusBar>

      <OptionsDialog />

      <InputMethod>
        <Svg w={29} h={29}><path fill="#ea5a2c" stroke="none" d="m1 5 23-4 4 24-22 3z" /><path stroke="#fff" strokeWidth="4" d="M23 7c-5-2-15-1-15 2.500C8 14.500 22 11 22 17c0 5-9 5-15 3" /></Svg>
        <span>中</span>
        <Svg w={14} h={15}><circle cx="3" cy="5" r="2" strokeWidth="1.500" /><path d="M10 8.500c2 0 2 3 0 4" strokeWidth="2" /></Svg>
        <Svg w={16} strokeWidth="1.800"><circle cx="8" cy="8" r="7" /><path d="M4.500 9c1 4 6 4 7 0" /><path d="M5.500 4.500v2M10.500 4.500v2" /></Svg>
        <Svg w={14} h={16}><rect {...F} x="4" y="0" width="6" height="10" rx="3" /><path d="M1.500 6.500c0 7 11 7 11 0M7 12v3M4 15h6" strokeWidth="1.600" /></Svg>
        <Svg w={17} h={13}><path {...F} d="M0 1h17v11H0z" /><path stroke="#fff" strokeDasharray="2 1" strokeWidth="1.500" d="M1.500 4H16M1.500 6.800H16" /><path stroke="#fff" strokeWidth="1.500" d="M4 9.700h9" /></Svg>
        <Svg w={14} h={15} color="#a9b8d6"><circle {...F} cx="5.500" cy="3.500" r="3.500" /><path {...F} d="M0 14c0-8 11-8 11-2h3v3H0z" /></Svg>
        <Svg w={15} h={14}><path {...F} d="M4 0c1 2 6 2 7 0l4 3-2 4-2-1v8H4V6L2 7 0 3z" /></Svg>
        <Svg w={14} h={14} strokeWidth="1.500"><path {...F} d="M0 0h6v6H0zM0 8h6v6H0zM8 8h6v6H8z" /><path d="M8.700.7h4.600v4.600H8.700z" /></Svg>
      </InputMethod>
      <Signature>头条 @地球小白痴</Signature>
    </Window>
  );
}
